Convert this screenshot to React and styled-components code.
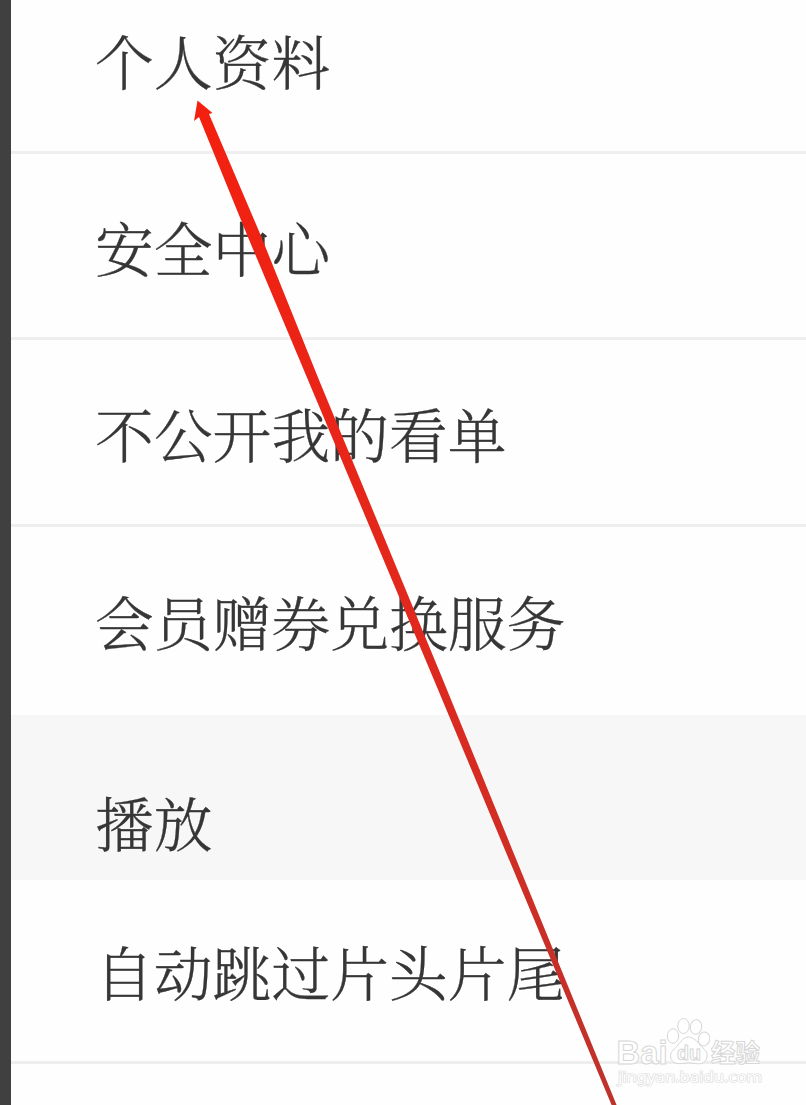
import React from "react";
import styled, { createGlobalStyle } from "styled-components";

const GlobalStyle = createGlobalStyle`
  * { box-sizing: border-box; }
  body { margin: 0; background: #fefefe; overflow: hidden; }
`;

const Screen = styled.div`
  position: relative;
  display: flex;
  width: 806px;
  height: 1105px;
  overflow: hidden;
  background: #fefefe;
  font-family: "Noto Serif CJK SC", "Noto Sans CJK SC", serif;
`;

const Edge = styled.div`
  flex: 0 0 11px;
  background: #404040;
`;

const List = styled.main`
  flex: 1;
  display: flex;
  flex-direction: column;
`;

const Row = styled.div`
  flex: 0 0 ${(p) => p.$height}px;
  padding: ${(p) => p.$top}px 0 0 84px;
  border-bottom: ${(p) => (p.$divider ? "3px solid #eeeeee" : "none")};
  background: ${(p) => (p.$section ? "#f7f7f7" : "transparent")};
`;

const Label = styled.span`
  display: block;
  height: 60px;
  line-height: 60px;
  font-size: 58.8px;
  font-weight: 300;
  color: #363636;
  -webkit-text-stroke: 0.3px #363636;
  white-space: nowrap;
`;

const Arrow = styled.svg`
  position: absolute;
  inset: 0;
  width: 806px;
  height: 1105px;
`;

const Watermark = styled.svg`
  position: absolute;
  left: 612px;
  top: 1012px;
  width: 160px;
  height: 84px;
  fill: #fff;
  stroke: #d6d6d6;
  stroke-width: 1;
`;

const SiteAddress = styled.text`
  font: 14px "Noto Sans", sans-serif;
  stroke: #dadada;
  stroke-width: 1.2px;
  paint-order: stroke;
`;

const rows = [
  { text: "个人资料", height: 154, top: 30, divider: true },
  { text: "安全中心", height: 186, top: 63, divider: true },
  { text: "不公开我的看单", height: 187, top: 63, divider: true },
  { text: "会员赠券兑换服务", height: 188, top: 64 },
  { text: "播放", height: 165, top: 77, section: true },
  { text: "自动跳过片头片尾", height: 184, top: 61, divider: true },
];

export default function App() {
  return (
    <Screen>
      <GlobalStyle />
      <Edge />
      <List>
        {rows.map((r) => (
          <Row key={r.text} $height={r.height} $top={r.top} $divider={r.divider} $section={r.section}>
            <Label>{r.text}</Label>
          </Row>
        ))}
      </List>
      <Arrow viewBox="0 0 806 1105">
        <defs>
          <linearGradient id="shaft" x1="0" y1="0" x2="0" y2="1">
            <stop offset="0" stopColor="#f4200f" />
            <stop offset="0.5" stopColor="#e2281d" />
            <stop offset="1" stopColor="#bd332c" />
          </linearGradient>
        </defs>
        <path
          d="M197.5 100.5 L212.5 113 L209 114 L261 236 L319 380 L443 680 L617 1106 L612 1106 L434 680 L308 380 L247.500 236 L199 117 L194 121 Z"
          fill="url(#shaft)"
        />
      </Arrow>
      <Watermark viewBox="0 0 160 84">
        <text x="4.500" y="51.5" fontFamily="Liberation Sans" fontWeight="700" fontSize="33.500" textLength="51" lengthAdjust="spacingAndGlyphs">Bai</text>
        <path d="M76.500 25 C81 25 85 29 88 33 C92 37 96 40 95 45 C94 51 89 52.500 84 51.500 Q76.500 50 69 51.500 C63 52.500 58.500 49 58.500 44 C58.500 39 63 37 66 33 C69 29 72 25 76.500 25 Z" />
        <ellipse cx="61" cy="24" rx="5.7" ry="7.2" />
        <ellipse cx="71.500" cy="14" rx="5.7" ry="7.5" />
        <ellipse cx="84" cy="15" rx="5.7" ry="7.2" transform="rotate(8 84 15)" />
        <ellipse cx="92" cy="27" rx="5.7" ry="7" transform="rotate(12 92 27)" />
        <text x="65" y="47.500" fontFamily="Liberation Sans" fontWeight="700" fontSize="20" textLength="24" lengthAdjust="spacingAndGlyphs">du</text>
        <text x="99" y="49.500" fontFamily="Noto Sans CJK SC" fontWeight="700" fontSize="25" textLength="49" lengthAdjust="spacingAndGlyphs">经验</text>
        <SiteAddress x="6" y="70" textLength="144" lengthAdjust="spacingAndGlyphs">jingyan.baidu.com</SiteAddress>
      </Watermark>
    </Screen>
  );
}
